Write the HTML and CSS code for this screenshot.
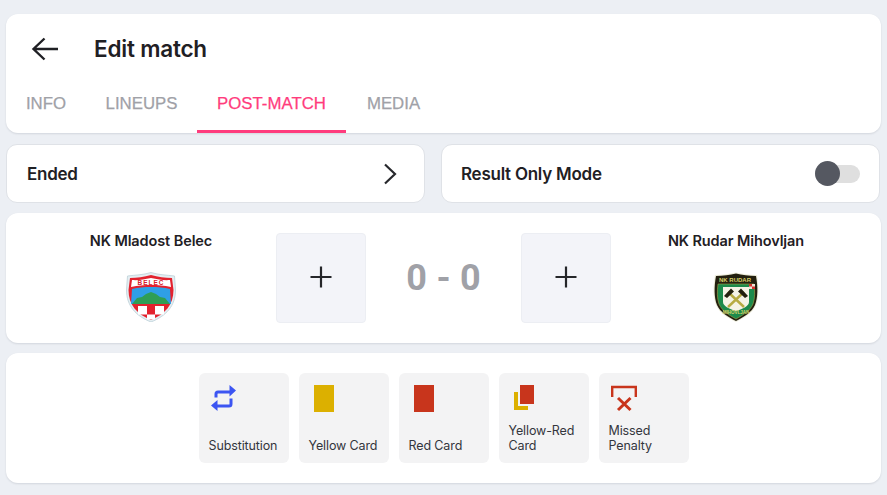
FILE: index.html
```html
<!DOCTYPE html>
<html lang="en">
<head>
<meta charset="utf-8">
<title>Edit match</title>
<link rel="stylesheet" href="styles.css">
</head>
<body>
<main class="page">
  <section class="card header">
    <div class="title-row">
      <svg class="back" width="28" height="24" viewBox="0 0 28 24"><path d="M27 12H2.500M13.500 1.500L2.500 12 13.500 22.500" fill="none" stroke="#1f2024" stroke-width="2.400"/></svg>
      <h1 class="title">Edit match</h1>
    </div>
    <nav class="tabs">
      <a class="tab tab-info">INFO</a>
      <a class="tab tab-lineups">LINEUPS</a>
      <a class="tab tab-post active">POST-MATCH</a>
      <a class="tab tab-media">MEDIA</a>
    </nav>
  </section>

  <div class="status-row">
    <div class="status-card status-left">
      <span class="status-label">Ended</span>
      <svg width="14" height="22" viewBox="0 0 14 22"><path d="M2 1.500L12 11 2 20.500" fill="none" stroke="#27282c" stroke-width="2.200"/></svg>
    </div>
    <div class="status-card status-right">
      <span class="status-label">Result Only Mode</span>
      <span class="toggle"><span class="knob"></span></span>
    </div>
  </div>

  <section class="card score">
    <div class="team team-home">
      <div class="team-name">NK Mladost Belec</div>
      <svg class="crest" width="50" height="50" viewBox="0 0 50 50">
        <path d="M1.500 4C9 3 17 3 25 .5 33 3 41 3 48.500 4L49.500 18C49.500 34 40 44 25 50 10 44 .5 34 .5 18z" fill="#e4eef2" stroke="#bcd0d8" stroke-width=".8"/>
        <path d="M4 6C11 6 18 5 25 3 32 5 39 6 46 6L47.500 18C47.500 33 39 42 25 48 11 42 2.500 33 2.500 18z" fill="#e3222e"/>
        <path d="M6 17C12 15.500 18 15 25 15 32 15 38 15.500 44 17L45 32H5z" fill="#2f9fe6"/>
        <path d="M6 32L11 26 16 25 20 22 25 20 30 22 34 25 39 26 44 32z" fill="#2f9e55"/>
        <path d="M6 8C12 8.500 18 7.500 25 6 32 7.500 38 8.500 44 8L45 15C38 13.500 32 13 25 13 18 13 12 13.500 5 15z" fill="#fff"/>
        <text class="crest-belec" x="25" y="12.500" text-anchor="middle">BELEC</text>
        <rect x="12" y="34" width="9" height="8.500" fill="#fff"/>
        <rect x="29" y="34" width="9" height="8.500" fill="#fff"/>
        <rect x="21" y="42.500" width="8" height="5" fill="#fff"/>
      </svg>
    </div>
    <button class="add-box"><svg width="24" height="24" viewBox="0 0 24 24"><path d="M12 1.500v21M1.500 12h21" stroke="#25262a" stroke-width="2.200"/></svg></button>
    <div class="result">0 - 0</div>
    <button class="add-box"><svg width="24" height="24" viewBox="0 0 24 24"><path d="M12 1.500v21M1.500 12h21" stroke="#25262a" stroke-width="2.200"/></svg></button>
    <div class="team team-away">
      <div class="team-name">NK Rudar Mihovljan</div>
      <svg class="crest" width="50" height="50" viewBox="0 0 50 50">
        <path d="M4 3C11 3 18 2 25 .5 32 2 39 3 46 3 48 15 48 25 45 33 42 41 33 46 25 50 17 46 8 41 5 33 2 25 2 15 4 3z" fill="#efeedd"/>
        <path d="M5 4C12 4 19 3 25 1.500 31 3 38 4 45 4 47 15 47 25 44 33 41 40 33 45 25 49 17 45 9 40 6 33 3 25 3 15 5 4z" fill="#23200f"/>
        <path d="M7 12H43C44 20 44 26 42 32 39 39 32 43 25 47 18 43 11 39 8 32 6 26 6 20 7 12z" fill="#1c8a4b" stroke="#a9a347" stroke-width=".6"/>
        <path d="M12 15H38V30C38 34 32 37 25 39 18 37 12 34 12 30z" fill="#f5f3e6"/>
        <path d="M17 20L33 35M33 20L17 35" stroke="#b7ab43" stroke-width="2.400"/>
        <path d="M13 24L20 16.500 23 19.500 16 26zM37 24L30 16.500 27 19.500 34 26z" fill="#23200f"/>
        <text class="crest-rudar" x="24" y="9.500" text-anchor="middle">NK RUDAR</text>
        <text class="crest-mihov" x="25" y="42" text-anchor="middle">MIHOVLJAN</text>
        <rect x="38" y="12" width="6" height="5" fill="#e8e6d8"/>
        <rect x="38" y="12" width="3" height="2.500" fill="#d8302c"/>
        <rect x="41" y="14.500" width="3" height="2.500" fill="#d8302c"/>
      </svg>
    </div>
  </section>

  <section class="card events">
    <button class="event">
      <svg class="event-icon" width="26" height="28" viewBox="0 0 26 28"><path d="M5 12.500V9A2 2 0 0 1 7 7H20M20 13.500V19A2 2 0 0 1 18 21H6" fill="none" stroke="#3c55f2" stroke-width="3"/><path d="M18.500 0L25 5.500 18.500 11.500zM6.500 15L0 20.500 6.500 26z" fill="#3c55f2"/></svg>
      <span class="event-label">Substitution</span>
    </button>
    <button class="event">
      <span class="card-shape yellow"></span>
      <span class="event-label">Yellow Card</span>
    </button>
    <button class="event">
      <span class="card-shape red"></span>
      <span class="event-label">Red Card</span>
    </button>
    <button class="event">
      <svg class="event-icon" width="26" height="28" viewBox="0 0 26 28"><path d="M5 7V23H17" fill="none" stroke="#dcb000" stroke-width="4"/><rect x="9" y="0" width="14" height="19" fill="#c8351c"/></svg>
      <span class="event-label">Yellow-Red Card</span>
    </button>
    <button class="event">
      <svg class="event-icon" width="26" height="28" viewBox="0 0 26 28"><path d="M1.200 12V2H24.800V12" fill="none" stroke="#c8351c" stroke-width="2.400"/><path d="M7 13L19.500 25M19.500 13L7 25" stroke="#c8351c" stroke-width="3"/></svg>
      <span class="event-label">Missed Penalty</span>
    </button>
  </section>
</main>
</body>
</html>
```

FILE: styles.css
```css
* { box-sizing: border-box; }

html, body {
  margin: 0;
  height: 100%;
  overflow: hidden;
}

body {
  background: #eceff4;
  font-family: "Inter", "Liberation Sans", sans-serif;
  color: #1f2024;
}

.page {
  display: flex;
  flex-direction: column;
  gap: 10px;
  padding: 14px 6px 0;
}

.card {
  background: #fff;
  border-radius: 12px;
  box-shadow: 0 1px 2px rgba(30, 40, 60, 0.12);
}

.header {
  height: 119px;
  display: flex;
  flex-direction: column;
  justify-content: space-between;
}

.title-row {
  display: flex;
  align-items: center;
  padding: 22px 0 0 25px;
  gap: 35px;
}

.back { display: block; }

.title {
  margin: 0;
  font-size: 22.500px;
  line-height: 26px;
  font-weight: 600;
  letter-spacing: -0.2px;
}

.tabs {
  display: flex;
  height: 44px;
}

.tab {
  display: flex;
  align-items: flex-start;
  justify-content: center;
  padding-top: 5px;
  font-family: "Liberation Sans", sans-serif;
  font-size: 16.800px;
  line-height: 20px;
  color: #a0a1a7;
  font-weight: 400;
  -webkit-text-stroke: 0.25px currentColor;
}

.tab-info { width: 80px; }
.tab-lineups { width: 111px; }
.tab-post { width: 149px; }
.tab-media { width: 95px; }

.tab.active {
  color: #ff3c7d;
  border-bottom: 3px solid #ff3c7d;
}

.status-row {
  display: flex;
  gap: 16px;
  padding: 1px 1px 0 0;
}

.status-card {
  height: 59px;
  background: #fff;
  border: 1px solid #dfe2e7;
  border-radius: 11px;
  display: flex;
  align-items: center;
  justify-content: space-between;
  padding: 0 19px 0 19px;
}

.status-left { width: 419px; padding-left: 20px; padding-right: 27px; }
.status-right { flex: 1; }

.status-label {
  font-size: 17px;
  font-weight: 600;
  letter-spacing: -0.25px;
}

.toggle {
  position: relative;
  display: block;
  width: 45px;
  height: 18px;
  border-radius: 9px;
  background: #dfdfdf;
}

.knob {
  position: absolute;
  left: 0;
  top: -3.500px;
  width: 25px;
  height: 25px;
  border-radius: 50%;
  background: #555861;
}

.score {
  height: 130px;
  display: flex;
  padding-top: 20px;
}

.team {
  display: flex;
  flex-direction: column;
  align-items: center;
}

.team-home { width: 270px; padding-left: 20px; }
.team-away { width: 250px; }

.team-name {
  font-size: 14.500px;
  line-height: 18px;
  font-weight: 600;
  letter-spacing: -0.1px;
  margin-top: -1px;
}

.crest {
  display: block;
  margin-top: 22px;
}

.crest-belec {
  font: 700 6.500px "Liberation Sans", sans-serif;
  fill: #d8202c;
  letter-spacing: 1px;
}

.crest-rudar {
  font: 700 6px "Liberation Sans", sans-serif;
  fill: #d8d16a;
}

.crest-mihov {
  font: 700 4.500px "Liberation Sans", sans-serif;
  fill: #d8d16a;
}

.add-box {
  width: 90px;
  height: 90px;
  padding: 0 0 2px;
  background: #f3f4f9;
  border: 1px solid #eceef3;
  border-radius: 4px;
  display: flex;
  align-items: center;
  justify-content: center;
}

.result {
  width: 155px;
  text-align: center;
  font-family: "Roboto", "Liberation Sans", sans-serif;
  font-size: 36px;
  line-height: 90px;
  font-weight: 700;
  word-spacing: 0.5px;
  color: #a0a1a7;
}

.events {
  height: 130px;
  display: flex;
  justify-content: center;
  gap: 10px;
  padding-top: 20px;
}

.event {
  width: 90px;
  height: 90px;
  padding: 0 4px 10px 10px;
  border: 0;
  border-radius: 6px;
  background: #f3f3f4;
  position: relative;
  display: flex;
  align-items: flex-end;
  text-align: left;
  font-family: "Inter", "Liberation Sans", sans-serif;
}

.event-label {
  font-size: 12.500px;
  line-height: 15px;
  color: #33363d;
  letter-spacing: -0.12px;
}

.event-icon {
  position: absolute;
  left: 12px;
  top: 12px;
}

.card-shape {
  position: absolute;
  left: 15px;
  top: 11.500px;
  width: 20px;
  height: 27px;
}

.yellow { background: #dcb000; }
.red { background: #c8351c; }
```
